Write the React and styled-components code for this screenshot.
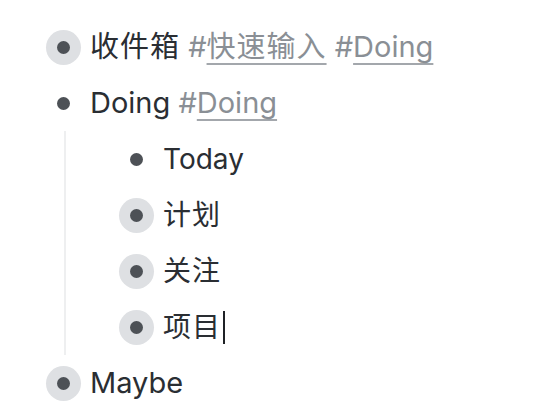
import React from "react";
import styled, { createGlobalStyle } from "styled-components";

const GlobalStyle = createGlobalStyle`
  body {
    margin: 0;
    background: #ffffff;
    font-family: Inter, "Noto Sans CJK SC", sans-serif;
  }
`;

const outline = [
  { title: "收件箱", tags: ["快速输入", "Doing"], collapsed: true },
  {
    title: "Doing",
    tags: ["Doing"],
    children: [
      { title: "Today" },
      { title: "计划", collapsed: true },
      { title: "关注", collapsed: true },
      { title: "项目", collapsed: true, editing: true },
    ],
  },
  { title: "Maybe", collapsed: true },
];

// CJK glyphs in the reference sit a little wider apart than Noto's
const Text = ({ children }) =>
  /[\u4e00-\u9fff]/.test(children) ? <Cjk>{children}</Cjk> : children;

const Node = ({ node, depth = 0 }) => (
  <>
    <Row>
      <Bullet $collapsed={node.collapsed}>
        <Dot />
      </Bullet>
      <Title $top={depth === 0}>
        <Text>{node.title}</Text>
        {node.editing && <Caret />}
        {node.tags &&
          node.tags.map((tag) => (
            <Tag key={tag}>
              {" "}#<TagName><Text>{tag}</Text></TagName>
            </Tag>
          ))}
      </Title>
    </Row>
    {node.children && (
      <Children>
        {node.children.map((child) => (
          <Node key={child.title} node={child} depth={depth + 1} />
        ))}
      </Children>
    )}
  </>
);

export default function App() {
  return (
    <>
      <GlobalStyle />
      <Outline>
        {outline.map((node) => (
          <Node key={node.title} node={node} />
        ))}
      </Outline>
    </>
  );
}

const Outline = styled.div`
  display: flex;
  flex-direction: column;
  padding: 19px 0 0 46px;
`;

const Row = styled.div`
  display: flex;
  align-items: center;
  gap: 9px;
  height: 56px;
`;

const Bullet = styled.div`
  flex: none;
  display: flex;
  align-items: center;
  justify-content: center;
  width: 35px;
  height: 35px;
  border-radius: 50%;
  background: ${(p) => (p.$collapsed ? "#dee0e3" : "transparent")};
`;

const Dot = styled.span`
  width: 13px;
  height: 13px;
  border-radius: 50%;
  background: #4d5156;
`;

const Title = styled.div`
  font-size: ${(p) => (p.$top ? "29px" : "28px")};
  line-height: 36px;
  color: #2a2e33;
  white-space: nowrap;
`;

const Cjk = styled.span`
  letter-spacing: 1px;
`;

const Tag = styled.span`
  color: #8a8f95;
`;

const TagName = styled.span`
  text-decoration: underline;
  text-decoration-color: #a3a7ac;
  text-decoration-thickness: 2px;
  text-underline-offset: 6px;
`;

const Caret = styled.span`
  display: inline-block;
  width: 2px;
  height: 33px;
  margin-left: 2px;
  vertical-align: -7px;
  background: #1f2226;
`;

const Children = styled.div`
  display: flex;
  flex-direction: column;
  margin-left: 18px;
  padding-left: 53px;
  border-left: 2px solid #eeeff0;
`;
